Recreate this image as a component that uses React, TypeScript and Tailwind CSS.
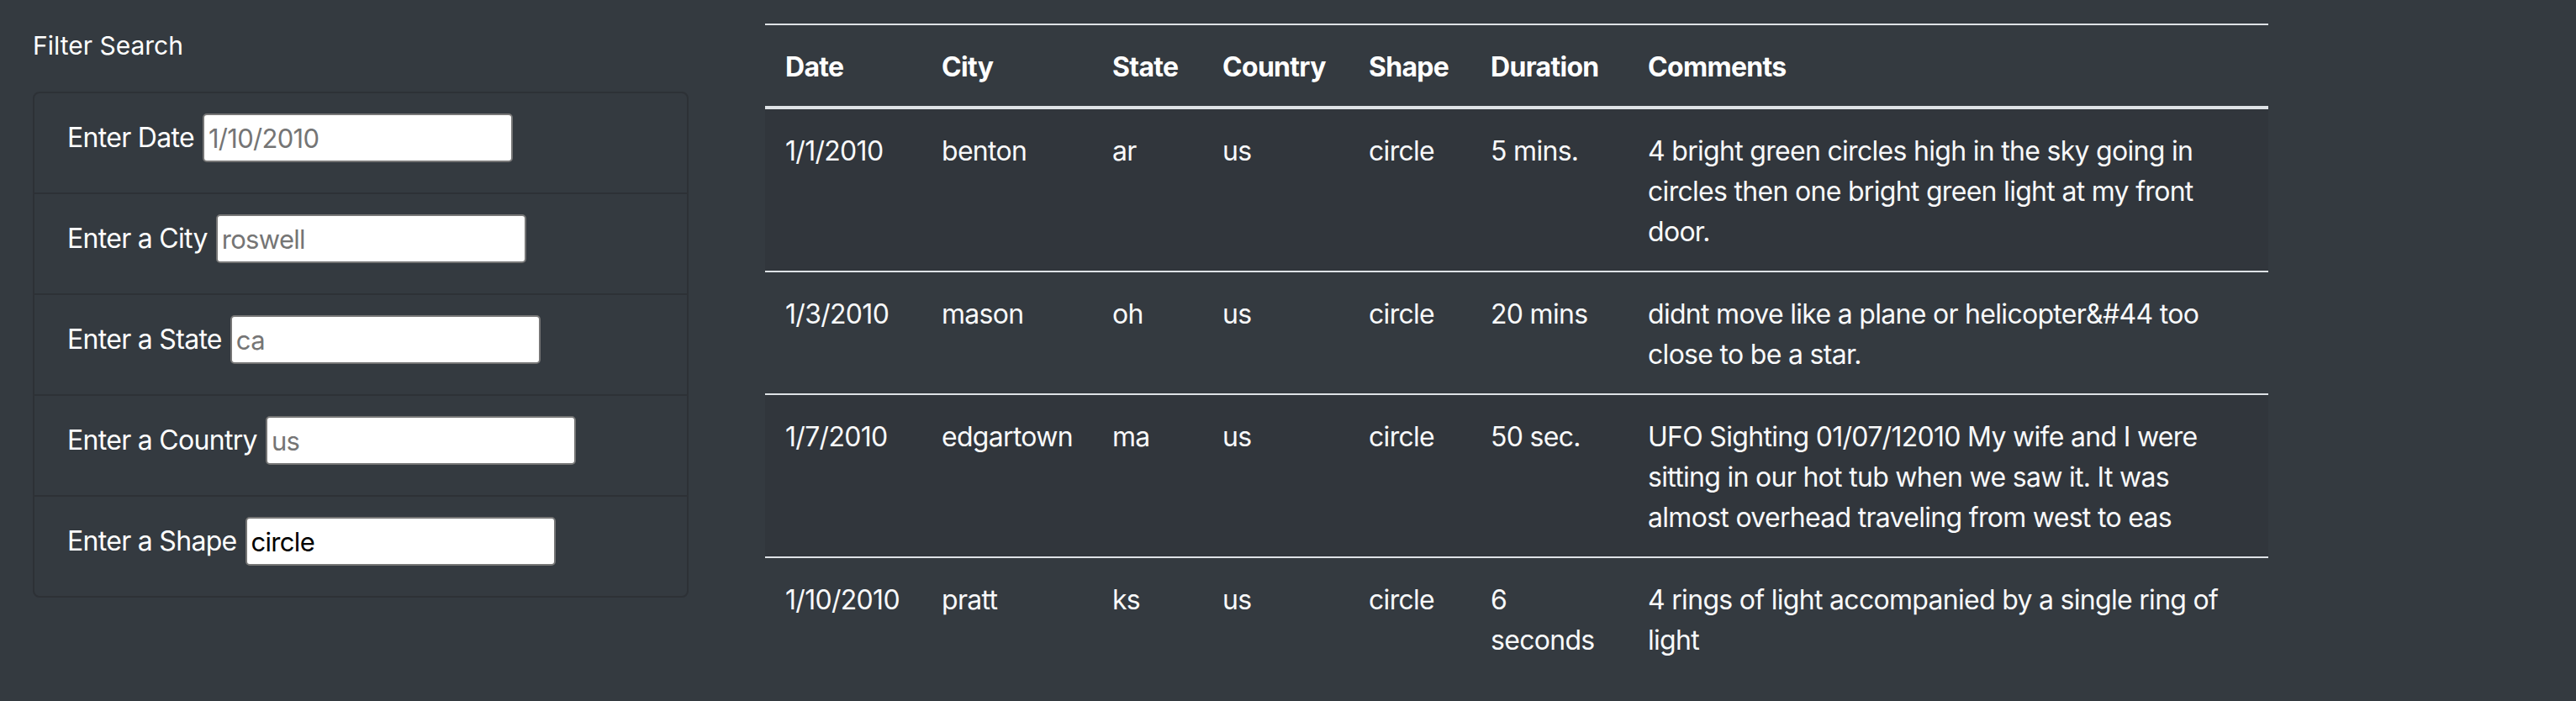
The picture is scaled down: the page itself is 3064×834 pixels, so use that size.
import { useState } from "react";

type Sighting = {
    datetime: string;
    city: string;
    state: string;
    country: string;
    shape: string;
    durationMinutes: string;
    comments: string;
};

const sightings: Sighting[] = [
    {
        datetime: "1/1/2010",
        city: "benton",
        state: "ar",
        country: "us",
        shape: "circle",
        durationMinutes: "5 mins.",
        comments: "4 bright green circles high in the sky going in circles then one bright green light at my front door.",
    },
    {
        datetime: "1/3/2010",
        city: "mason",
        state: "oh",
        country: "us",
        shape: "circle",
        durationMinutes: "20 mins",
        comments: "didnt move like a plane or helicopter&#44 too close to be a star.",
    },
    {
        datetime: "1/7/2010",
        city: "edgartown",
        state: "ma",
        country: "us",
        shape: "circle",
        durationMinutes: "50 sec.",
        comments: "UFO Sighting 01/07/12010 My wife and I were sitting in our hot tub when we saw it. It was almost overhead traveling from west to eas",
    },
    {
        datetime: "1/10/2010",
        city: "pratt",
        state: "ks",
        country: "us",
        shape: "circle",
        durationMinutes: "6 seconds",
        comments: "4 rings of light accompanied by a single ring of light",
    },
];

const filters = [
    { id: "datetime", label: "Enter Date", placeholder: "1/10/2010" },
    { id: "city", label: "Enter a City", placeholder: "roswell" },
    { id: "state", label: "Enter a State", placeholder: "ca" },
    { id: "country", label: "Enter a Country", placeholder: "us" },
    { id: "shape", label: "Enter a Shape", placeholder: "circle" },
];

export default function App() {
    const [values, setValues] = useState<Record<string, string>>({ shape: "circle" });

    return (
        <div className="min-h-screen bg-[#343a40] text-[#f8f9fa] font-['Inter',sans-serif] tracking-[-0.7px] flex items-start pl-[39px] pt-[28px]">
            {/* Filters */}
            <aside className="w-[780px] shrink-0">
                <h5 className="pt-[4px] text-[30px] leading-[45px] text-white tracking-normal">Filter Search</h5>
                <ul className="mt-[32px] rounded-[8px] border-2 border-[#2d3136]">
                    {filters.map((f, i) => (
                        <li
                            key={f.id}
                            className={`flex items-center gap-[10px] pl-[39px] pt-[24px] pb-[36px] ${i > 0 ? "border-t-2 border-[#2d3136]" : ""}`}
                        >
                            <label htmlFor={f.id} className="text-[32px] leading-[48px] text-white">
                                {f.label}
                            </label>
                            <input
                                id={f.id}
                                type="text"
                                placeholder={f.placeholder}
                                value={values[f.id] ?? ""}
                                onChange={(e) => setValues({ ...values, [f.id]: e.target.value })}
                                className="h-[58px] w-[369px] rounded-[5px] border-2 border-[#767676] bg-white px-[5px] text-[31px] tracking-[-0.7px] text-black placeholder:text-[#757575] outline-none"
                            />
                        </li>
                    ))}
                </ul>
            </aside>

            {/* Results */}
            <table className="ml-[91px] w-[1788px] table-fixed border-collapse text-left text-[32px] leading-[48px]">
                <thead>
                    <tr className="text-white">
                        <th className="w-[186px] border-t-2 border-b-4 border-[#dee2e6] px-[24px] pt-[26px] pb-[22px] font-bold">Date</th>
                        <th className="w-[203px] border-t-2 border-b-4 border-[#dee2e6] px-[24px] pt-[26px] pb-[22px] font-bold">City</th>
                        <th className="w-[131px] border-t-2 border-b-4 border-[#dee2e6] px-[24px] pt-[26px] pb-[22px] font-bold">State</th>
                        <th className="w-[174px] border-t-2 border-b-4 border-[#dee2e6] px-[24px] pt-[26px] pb-[22px] font-bold">Country</th>
                        <th className="w-[145px] border-t-2 border-b-4 border-[#dee2e6] px-[24px] pt-[26px] pb-[22px] font-bold">Shape</th>
                        <th className="w-[187px] border-t-2 border-b-4 border-[#dee2e6] px-[24px] pt-[26px] pb-[22px] font-bold">Duration</th>
                        <th className="border-t-2 border-b-4 border-[#dee2e6] px-[24px] pt-[26px] pb-[22px] font-bold">Comments</th>
                    </tr>
                </thead>
                <tbody>
                    {sightings.map((s, i) => (
                        <tr key={s.datetime} className={i % 2 === 0 ? "bg-[#31363c]" : ""}>
                            <td className="border-t-2 border-[#dee2e6] px-[24px] pt-[26px] pb-[22px] align-top">{s.datetime}</td>
                            <td className="border-t-2 border-[#dee2e6] px-[24px] pt-[26px] pb-[22px] align-top">{s.city}</td>
                            <td className="border-t-2 border-[#dee2e6] px-[24px] pt-[26px] pb-[22px] align-top">{s.state}</td>
                            <td className="border-t-2 border-[#dee2e6] px-[24px] pt-[26px] pb-[22px] align-top">{s.country}</td>
                            <td className="border-t-2 border-[#dee2e6] px-[24px] pt-[26px] pb-[22px] align-top">{s.shape}</td>
                            <td className="border-t-2 border-[#dee2e6] px-[24px] pt-[26px] pb-[22px] align-top">{s.durationMinutes}</td>
                            <td className="border-t-2 border-[#dee2e6] px-[24px] pt-[26px] pb-[22px] align-top">{s.comments}</td>
                        </tr>
                    ))}
                </tbody>
            </table>
        </div>
    );
}
